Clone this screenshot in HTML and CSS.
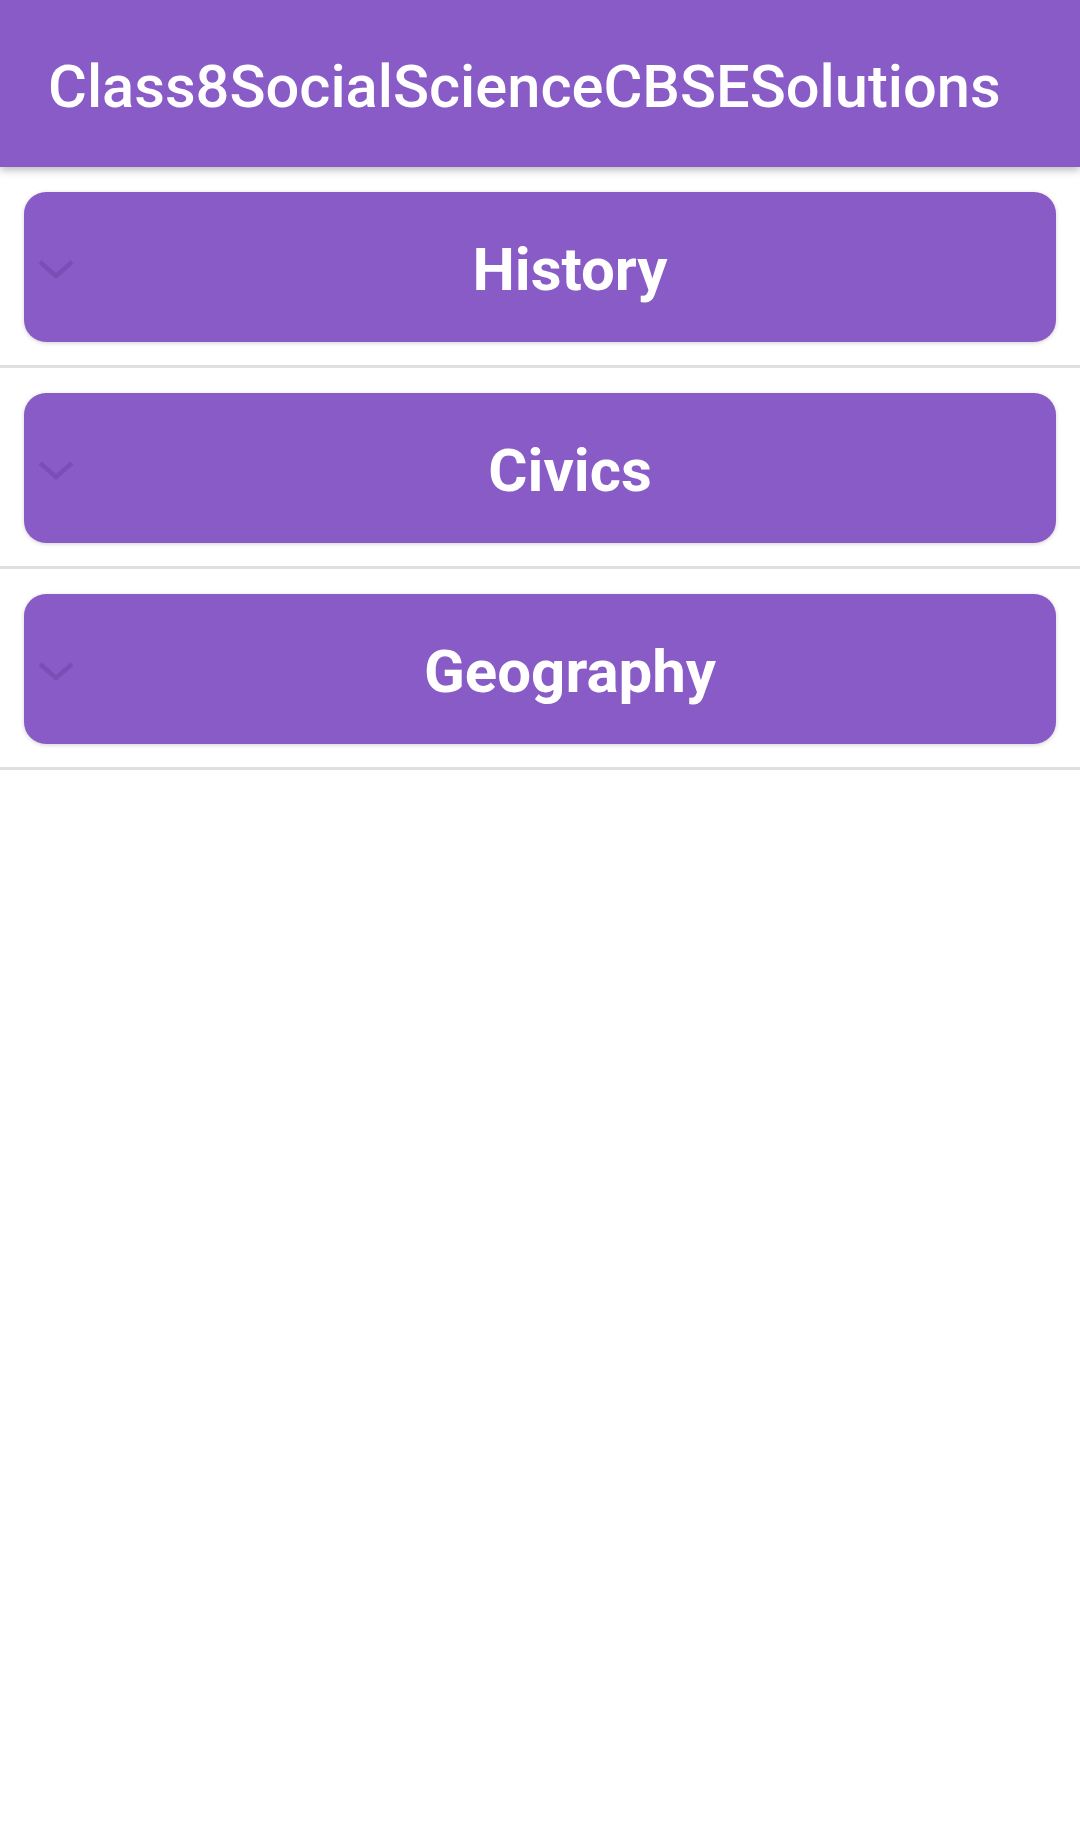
FILE: index.html
```html
<!DOCTYPE html>
<html>
<head>
<meta charset="utf-8">
<link rel="stylesheet" href="styles.css">
</head>
<body>
<header class="appbar">
  <h1 class="title">Class8SocialScienceCBSESolutions</h1>
</header>
<main class="list">
  <section class="item">
    <div class="card">
      <svg class="chev" viewBox="0 0 36 20" width="36" height="20"><path d="M2 3 L18 17 L34 3" fill="none" stroke="currentColor" stroke-width="4.5"/></svg>
      <span class="label">History</span>
    </div>
  </section>
  <section class="item">
    <div class="card">
      <svg class="chev" viewBox="0 0 36 20" width="36" height="20"><path d="M2 3 L18 17 L34 3" fill="none" stroke="currentColor" stroke-width="4.5"/></svg>
      <span class="label">Civics</span>
    </div>
  </section>
  <section class="item">
    <div class="card">
      <svg class="chev" viewBox="0 0 36 20" width="36" height="20"><path d="M2 3 L18 17 L34 3" fill="none" stroke="currentColor" stroke-width="4.5"/></svg>
      <span class="label">Geography</span>
    </div>
  </section>
</main>
</body>
</html>
```
FILE: styles.css
```css
html, body {
  margin: 0;
  padding: 0;
  background: #ffffff;
  font-family: Roboto, "Liberation Sans", sans-serif;
}
.appbar {
  position: relative;
  z-index: 2;
  height: 167px;
  background: #895bc6;
  display: flex;
  align-items: center;
  padding: 6px 0 0 48px;
  box-sizing: border-box;
  box-shadow: 0 3px 8px rgba(0, 0, 0, 0.28);
}
.title {
  margin: 0;
  color: #ffffff;
  font-size: 59.6px;
  font-weight: 500;
  letter-spacing: 0;
  white-space: nowrap;
}
.list {
  display: flex;
  flex-direction: column;
}
.item {
  padding: 25px 24px 23px 24px;
  border-bottom: 3px solid #e0e0e0;
}
.card {
  height: 150px;
  background: #895bc6;
  border-radius: 22px;
  box-shadow: 0 1px 4px rgba(0, 0, 0, 0.18);
  display: flex;
  align-items: center;
}
.chev {
  flex: none;
  margin: 4px 0 0 14px;
  color: rgba(70, 30, 120, 0.22);
}
.label {
  flex: 1;
  text-align: center;
  color: #ffffff;
  font-size: 60px;
  font-weight: 700;
  padding: 4px 0 0 10px;
}
```
